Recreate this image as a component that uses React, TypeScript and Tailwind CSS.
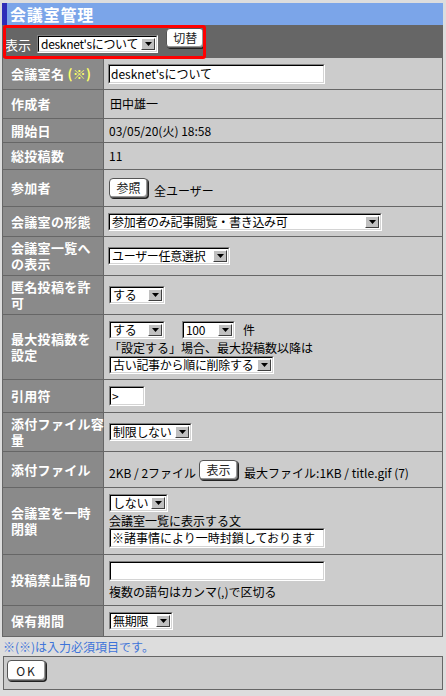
import { FC, ReactNode } from 'react';

// Classic inset dropdown
const Select: FC<{ value: string; className: string }> = ({ value, className }) => (
    <div className={`flex h-[18px] shrink-0 border border-t-[#808080] border-l-[#808080] border-r-white border-b-white ${className}`}>
        <div className="flex flex-1 items-stretch border border-t-black border-l-black border-r-[#d4d4d4] border-b-[#d4d4d4] bg-white">
            <span className="flex-1 whitespace-nowrap pl-[2px] pr-[2px] text-[12px] leading-[14px] tracking-[-0.3px] text-black">{value}</span>
            <span className="m-[1px] flex w-[14px] shrink-0 items-center justify-center border border-t-white border-l-white border-r-[#404040] border-b-[#404040] bg-[#c0c0c0]">
                <svg width="7" height="4" viewBox="0 0 7 4">
                    <path d="M0 0h7L3.5 4z" fill="#000" />
                </svg>
            </span>
        </div>
    </div>
);

// Inset text field
const Input: FC<{ value?: string; className: string }> = ({ value = '', className }) => (
    <div className={`flex h-[20px] shrink-0 border border-t-[#808080] border-l-[#808080] border-r-white border-b-white ${className}`}>
        <div className="flex flex-1 items-center overflow-hidden border border-t-black border-l-black border-r-[#d4d4d4] border-b-[#d4d4d4] bg-white pl-[1px] text-[12px] leading-[14px] text-black whitespace-nowrap">
            {value}
        </div>
    </div>
);

const Button: FC<{ label: string; className?: string }> = ({ label, className = '' }) => (
    <div className={`flex h-[20px] items-center justify-center rounded-[4px] border border-[#555] bg-white text-[12px] leading-[14px] text-[#222] shadow-[inset_-1px_-1px_0_#999,1px_1px_0_#222] ${className}`}>
        {label}
    </div>
);

const Row: FC<{ label: ReactNode; h: string; children: ReactNode }> = ({ label, h, children }) => (
    <div className={`flex border-b border-[#666] ${h}`}>
        <div className="flex w-[101px] shrink-0 items-center whitespace-nowrap border-r border-[#666] bg-[#8a8a8a] pl-[8px] text-[13px] font-bold leading-[16px] tracking-[0.3px] text-white">
            <div>{label}</div>
        </div>
        <div className="flex flex-1 flex-col items-start justify-center bg-[#cccccc] pl-[4px] text-[12px] leading-[14px] text-black">
            {children}
        </div>
    </div>
);

export default function App() {
    return (
        <div className="h-[696px] w-[446px] overflow-hidden bg-[#dddddd] pl-[2px] pr-[3px] pt-[3px] font-['Noto_Sans_CJK_JP',sans-serif]">
            {/* Title bar */}
            <div className="flex h-[22px] items-center bg-[#7ba5e9]">
                <div className="w-[5px] self-stretch bg-[#2e2eb8]" />
                <span className="ml-[3px] text-[16px] font-bold leading-[20px] tracking-[0.8px] text-white">会議室管理</span>
            </div>

            {/* Display switcher */}
            <div className="relative flex h-[33px] items-start bg-[#666666] pl-[3px]">
                <span className="mt-[12px] text-[13px] leading-[16px] text-white">表示</span>
                <Select value="desknet'sについて" className="ml-[6px] mt-[10px] min-w-[116px]" />
                <Button label="切替" className="ml-[8px] mt-[3px] w-[38px]" />
                <div className="pointer-events-none absolute left-[1px] top-0 h-[34px] w-[203px] rounded-[3px] border-[3px] border-[#ff0000]" />
            </div>

            {/* Form */}
            <div className="border-l border-r border-[#666]">
                <Row h="h-[32px]" label={<>会議室名 <span className="text-[#ffff66]">(※)</span></>}>
                    <Input value="desknet'sについて" className="w-[217px]" />
                </Row>
                <Row h="h-[29px]" label="作成者">
                    <span className="pl-[2px]">田中雄一</span>
                </Row>
                <Row h="h-[24px]" label="開始日">
                    <span className="pl-[1px]">03/05/20(火) 18:58</span>
                </Row>
                <Row h="h-[27px]" label="総投稿数">
                    <span className="pl-[1px]">11</span>
                </Row>
                <Row h="h-[37px]" label="参加者">
                    <div className="flex items-end">
                        <Button label="参照" className="ml-[1px] w-[39px]" />
                        <span className="ml-[6px]">全ユーザー</span>
                    </div>
                </Row>
                <Row h="h-[30px]" label="会議室の形態">
                    <Select value="参加者のみ記事閲覧・書き込み可" className="min-w-[274px]" />
                </Row>
                <Row h="h-[39px]" label={<>会議室一覧へ<br />の表示</>}>
                    <Select value="ユーザー任意選択" className="min-w-[122px]" />
                </Row>
                <Row h="h-[39px]" label={<>匿名投稿を許<br />可</>}>
                    <Select value="する" className="ml-[1px] min-w-[56px]" />
                </Row>
                <Row h="h-[65px]" label={<>最大投稿数を<br />設定</>}>
                    <div className="flex items-center">
                        <Select value="する" className="ml-[1px] min-w-[56px]" />
                        <Select value="100" className="ml-[17px] min-w-[53px]" />
                        <span className="ml-[8px]">件</span>
                    </div>
                    <span className="mt-[2px] pl-[1px]">「設定する」場合、最大投稿数以降は</span>
                    <Select value="古い記事から順に削除する" className="ml-[1px] mt-[1px] min-w-[165px]" />
                </Row>
                <Row h="h-[33px]" label="引用符">
                    <Input value=">" className="ml-[1px] w-[36px]" />
                </Row>
                <Row h="h-[39px]" label={<>添付ファイル容<br />量</>}>
                    <Select value="制限しない" className="ml-[1px] min-w-[83px]" />
                </Row>
                <Row h="h-[36px]" label="添付ファイル">
                    <div className="flex items-end pl-[1px]">
                        <span>2KB / 2ファイル</span>
                        <Button label="表示" className="ml-[3px] w-[39px]" />
                        <span className="ml-[6px]">最大ファイル:1KB / title.gif (7)</span>
                    </div>
                </Row>
                <Row h="h-[67px]" label={<>会議室を一時<br />閉鎖</>}>
                    <Select value="しない" className="ml-[1px] min-w-[56px]" />
                    <span className="mt-[2px] pl-[1px]">会議室一覧に表示する文</span>
                    <Input value="※諸事情により一時封鎖しております" className="ml-[1px] w-[216px]" />
                </Row>
                <Row h="h-[51px]" label="投稿禁止語句">
                    <Input className="ml-[1px] w-[216px]" />
                    <span className="mt-[4px] pl-[1px]">複数の語句はカンマ(,)で区切る</span>
                </Row>
                <Row h="h-[31px]" label="保有期間">
                    <Select value="無期限" className="ml-[1px] min-w-[64px]" />
                </Row>
            </div>

            <div className="mt-[3px] pl-[1px] text-[12px] leading-[14px] text-[#3d74d9]">※(※)は入力必須項目です。</div>

            {/* Submit */}
            <div className="ml-[1px] mt-[2px] flex h-[34px] items-start border border-[#666] bg-[#cccccc] pl-[3px] pt-[3px]">
                <Button label="OK" className="h-[21px] w-[39px] tracking-[2px]" />
            </div>
        </div>
    );
}
